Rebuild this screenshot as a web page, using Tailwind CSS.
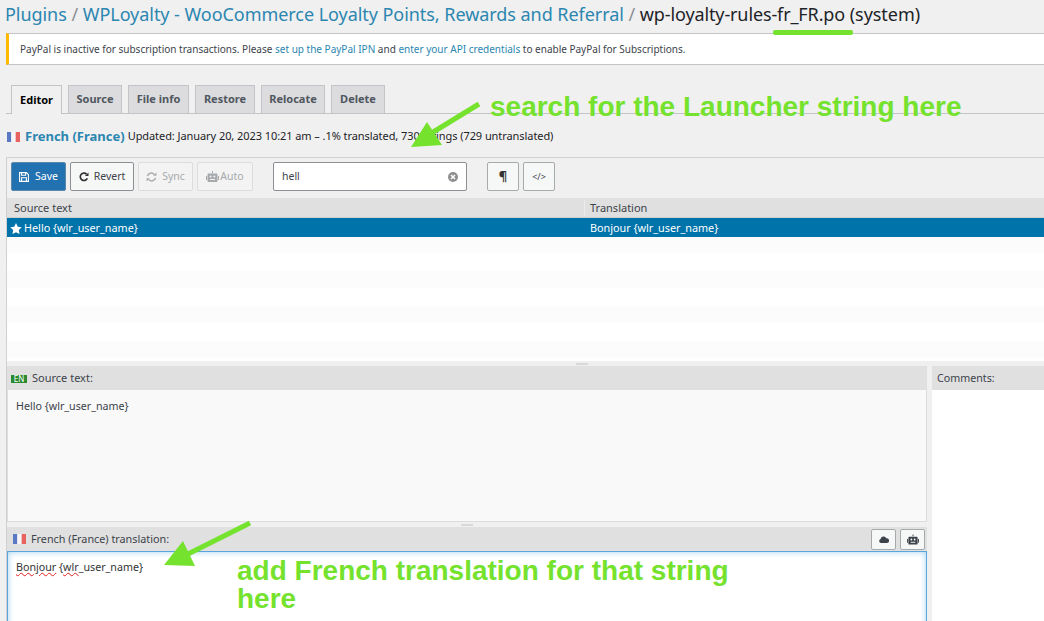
<!DOCTYPE html>
<html><head><meta charset="utf-8"><script src="https://cdn.jsdelivr.net/npm/@tailwindcss/browser@4"></script></head>
<body class="bg-[#f0f0f0]">
<div class="relative w-[1044px] h-[621px] overflow-hidden bg-[#f0f0f0] font-['Noto_Sans',sans-serif] text-[#3c434a] text-[11px]">
  <h1 class="h-[33px] pl-[5px] pt-[1px] text-[18px] leading-[26px] text-[#1d2327] whitespace-nowrap tracking-[-0.05px]"><span class="text-[#2b86b0]">Plugins</span> <span class="text-[#8c8f94]">/</span> <span class="text-[#2b86b0]">WPLoyalty - WooCommerce Loyalty Points, Rewards and Referral</span> <span class="text-[#8c8f94]">/</span> <span class="tracking-[-0.12px]">wp-loyalty-rules-fr_FR.po</span> <span>(system)</span></h1>

  <div class="ml-[6px] h-[32px] bg-white border-t border-b border-[#c3c4c7] border-l-[3px] border-l-[#ffb900] pl-[11px] pt-px flex items-center text-[10px] whitespace-nowrap">PayPal is inactive for subscription transactions. Please&nbsp;<span class="text-[#2b86b0]">set up the PayPal IPN</span>&nbsp;and&nbsp;<span class="text-[#2b86b0]">enter your API credentials</span>&nbsp;to enable PayPal for Subscriptions.</div>

  <div class="mt-[20px] ml-[6px] h-[29px] border-b border-[#c3c4c7] pl-[5px] flex items-end gap-[6px] font-bold text-[11px] text-[#50575e]">
    <div class="h-[29px] w-[51px] -mb-px bg-[#f0f0f0] border border-b-0 border-[#c3c4c7] flex items-center justify-center text-black">Editor</div>
    <div class="h-[28px] w-[54px] bg-[#dcdcde] border border-b-0 border-[#c3c4c7] flex items-center justify-center">Source</div>
    <div class="h-[28px] w-[61px] bg-[#dcdcde] border border-b-0 border-[#c3c4c7] flex items-center justify-center">File info</div>
    <div class="h-[28px] w-[60px] bg-[#dcdcde] border border-b-0 border-[#c3c4c7] flex items-center justify-center">Restore</div>
    <div class="h-[28px] w-[64px] bg-[#dcdcde] border border-b-0 border-[#c3c4c7] flex items-center justify-center">Relocate</div>
    <div class="h-[28px] w-[54px] bg-[#dcdcde] border border-b-0 border-[#c3c4c7] flex items-center justify-center">Delete</div>
  </div>

  <div class="h-[43px] pl-[7px] pt-[2px] flex items-center whitespace-nowrap text-[#1d2327]">
    <svg width="13" height="10" viewBox="0 0 13 10" class="mr-[5px]"><rect width="4.300" height="10" fill="#5a78c4"/><rect x="4.300" width="4.400" height="10" fill="#f6f6f8"/><rect x="8.700" width="4.300" height="10" fill="#e8625f"/></svg>
    <span class="text-[#2b86b0] font-bold text-[13px] mr-[3px]">French (France)</span><span class="text-[11px] tracking-[-0.07px]">Updated: January 20, 2023 10:21 am – .1% translated, 730 strings (729 untranslated)</span>
  </div>

  <div class="ml-[6px] border-t border-l border-[#d0d0d0]">
    <div class="h-[40px] flex items-start pt-[4px] pl-[4px] gap-[4px] text-[10.5px]">
      <div class="h-[29px] w-[55px] rounded-[2px] bg-[#2271b1] border border-[#5b87a8] text-white flex items-center justify-center gap-[6px]">
        <svg width="10" height="10" viewBox="0 0 10 10" fill="none" stroke="#fff" stroke-width="1.100"><path d="M.6.6h6.800l2 2v6.800H.6z"/><path d="M2.600.8v2.400h4V.8M2.600 9V5.800h4.800V9"/></svg>Save</div>
      <div class="h-[29px] w-[64px] rounded-[2px] bg-[#f6f7f7] border border-[#8c8f94] flex items-center justify-center gap-[5px]">
        <svg width="10" height="10" viewBox="0 0 10 10" fill="none" stroke="#333" stroke-width="1.700"><path d="M8.300 6.400A3.700 3.700 0 1 1 7.600 2.200"/><path d="M9.500.4v3.600H5.900z" fill="#333" stroke="none"/></svg>Revert</div>
      <div class="h-[29px] w-[55px] rounded-[2px] bg-[#f3f3f3] border border-[#dcdcde] text-[#a7aaad] flex items-center justify-center gap-[5px]">
        <svg width="11" height="10" viewBox="0 0 11 10" fill="none" stroke="#a7aaad" stroke-width="1.500"><path d="M1.400 4.200A4 4 0 0 1 8.400 2.600M9.600 5.800A4 4 0 0 1 2.600 7.400"/><path d="M10.400.6v3.200H7.200zM.6 9.400V6.200h3.200z" fill="#a7aaad" stroke="none"/></svg>Sync</div>
      <div class="h-[29px] w-[56px] rounded-[2px] bg-[#f3f3f3] border border-[#dcdcde] text-[#a7aaad] flex items-center justify-center gap-[1px]">
        <svg width="13" height="11" viewBox="0 0 13 11" fill="#a7aaad"><path d="M6 0h1v2H6zM2.500 2.500h8a1 1 0 0 1 1 1V10a1 1 0 0 1-1 1h-8a1 1 0 0 1-1-1V3.500a1 1 0 0 1 1-1zM0 5h1v4H0zM12 5h1v4h-1z"/><circle cx="4.700" cy="5.500" r="1" fill="#f3f3f3"/><circle cx="8.300" cy="5.500" r="1" fill="#f3f3f3"/><path d="M4 8h5v1H4z" fill="#f3f3f3"/></svg>Auto</div>
      <div class="ml-[16px] h-[29px] w-[194px] rounded-[2px] bg-white border border-[#8c8f94] flex items-center pl-[8px] pr-[8px] justify-between"><span>hell</span>
        <svg width="10" height="10" viewBox="0 0 10 10"><circle cx="5" cy="5" r="5" fill="#8f8f8f"/><path d="M3 3l4 4M7 3l-4 4" stroke="#fff" stroke-width="1.500"/></svg></div>
      <div class="ml-[16px] h-[29px] w-[32px] rounded-[2px] bg-[#f6f7f7] border border-[#a7aaad] flex items-center justify-center font-bold text-[13px] text-[#333]">¶</div>
      <div class="h-[29px] w-[32px] rounded-[2px] bg-[#f6f7f7] border border-[#a7aaad] flex items-center justify-center text-[9px]">&lt;/&gt;</div>
    </div>

    <div class="h-[20px] pt-px bg-[#e0e0e0] border-b border-[#d0d0d0] grid grid-cols-[577px_1fr] items-center"><span class="pl-[7px]">Source text</span><span class="pl-[5px] border-l border-[#ececec]">Translation</span></div>
    <div class="h-[19px] pt-px bg-[#0073aa] text-white grid grid-cols-[577px_1fr] items-center text-[10.8px]">
      <span class="pl-[3px] flex items-center gap-[2px]"><svg width="12" height="11" viewBox="0 0 24 23" fill="#fff"><path d="M12 0l3.700 7.800 8.300 1.100-6.100 5.900 1.500 8.400L12 19.100l-7.400 4.100 1.500-8.400L0 8.900l8.300-1.100z"/></svg>Hello {wlr_user_name}</span><span class="pl-[6px]">Bonjour {wlr_user_name}</span></div>
    <div class="h-[124px] bg-[repeating-linear-gradient(#fcfcfc_0,#fcfcfc_16px,#ffffff_16px,#ffffff_34px,#fcfcfc_34px,#fcfcfc_35px)]"></div>
    <div class="h-[5px] flex items-center pl-[569px] bg-[#efefef]"><div class="w-[12px] h-[2px] bg-[#d8d8d8]"></div></div>

    <div class="flex">
      <div class="w-[920px]">
        <div class="h-[24px] bg-[#e0e0e0] flex items-center pl-[4px] gap-[5px] pt-px"><span class="w-[16px] h-[8px] bg-[#2a8a32] text-white text-[8px] leading-[8px] text-center">EN</span><span>Source text:</span></div>
        <div class="h-[132px] bg-[#f9f9f9] border-x border-b border-[#dcdcdc] pl-[8px] pt-[8px] text-[10.7px]">Hello {wlr_user_name}</div>
        <div class="h-[5px] flex justify-center items-center"><div class="w-[12px] h-[2px] bg-[#d8d8d8]"></div></div>
        <div class="h-[24px] bg-[#e0e0e0] flex items-center pl-[6px] pr-[2px] gap-[5px]">
          <svg width="13" height="10" viewBox="0 0 13 10"><rect width="4.300" height="10" fill="#5a78c4"/><rect x="4.300" width="4.400" height="10" fill="#f6f6f8"/><rect x="8.700" width="4.300" height="10" fill="#e8625f"/></svg>
          <span class="text-[10.8px]">French (France) translation:</span>
          <div class="ml-auto w-[25px] h-[21px] rounded-[2px] bg-[#f6f7f7] border border-[#a7aaad] flex items-center justify-center"><svg width="10" height="8" viewBox="0 0 10 8" fill="#3c434a"><path d="M2 8a2 2 0 0 1-.400-3.900A3 3 0 0 1 7.300 3.200 2.400 2.400 0 0 1 8 8z"/></svg></div>
          <div class="-ml-[1px] w-[25px] h-[21px] rounded-[2px] bg-[#f6f7f7] border border-[#a7aaad] flex items-center justify-center"><svg width="12" height="11" viewBox="0 0 13 11" fill="#3c434a"><path d="M6 0h1v2H6zM2.500 2.500h8a1 1 0 0 1 1 1V10a1 1 0 0 1-1 1h-8a1 1 0 0 1-1-1V3.500a1 1 0 0 1 1-1zM0 5h1v4H0zM12 5h1v4h-1z"/><circle cx="4.700" cy="5.500" r="1" fill="#f6f7f7"/><circle cx="8.300" cy="5.500" r="1" fill="#f6f7f7"/><path d="M4 8h5v1H4z" fill="#f6f7f7"/></svg></div>
        </div>
        <div class="h-[100px] bg-white border border-[#5aa5dc] shadow-[inset_0_0_6px_#9fd0ef] pl-[8px] pt-[7px] text-[#333] text-[10.7px]"><span class="underline decoration-wavy decoration-[#e02020] decoration-[0.5px] underline-offset-1">Bonjour</span> <span>{<span class="underline decoration-wavy decoration-[#e02020] decoration-[0.5px] underline-offset-1">wlr</span>_user_name}</span></div>
      </div>
      <div class="w-[5px]"></div>
      <div class="flex-1">
        <div class="h-[24px] bg-[#e0e0e0] flex items-center pl-[5px] pt-px text-[10.7px]">Comments:</div>
        <div class="h-[240px] bg-white"></div>
      </div>
    </div>
  </div>

  <!-- annotations drawn over the screenshot -->
  <div class="absolute left-[773px] top-[30px] w-[80px] h-[5px] rounded-[2px] bg-[#75e22e]"></div>
  <div class="absolute left-[490px] top-[90px] text-[28px] leading-[34px] font-bold font-['Liberation_Sans',sans-serif] text-[#75e22e] whitespace-nowrap">search for the Launcher string here</div>
  <div class="absolute left-[237px] top-[557px] w-[520px] text-[28px] leading-[28px] font-bold font-['Liberation_Sans',sans-serif] text-[#75e22e]">add French translation for that string here</div>
  <svg class="absolute left-0 top-0" width="1044" height="621" viewBox="0 0 1044 621" fill="#75e22e" stroke="#75e22e">
    <path d="M479 104L430 134" stroke-width="5" fill="none"/><path d="M411 147L427 122L442 145z" stroke="none"/>
    <path d="M250 523L186 555" stroke-width="5" fill="none"/><path d="M164 565L183 541L195 566z" stroke="none"/>
  </svg>
</div>
</body></html>
